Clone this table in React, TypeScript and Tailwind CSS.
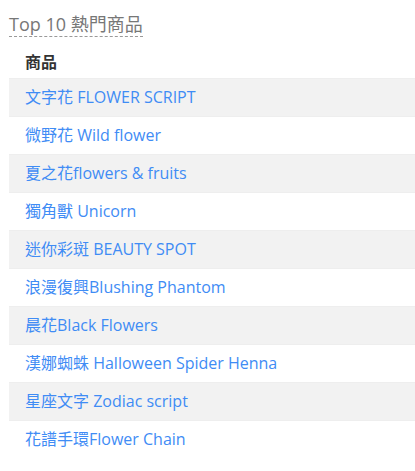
import React from 'react';

const items = [
  '文字花 FLOWER SCRIPT',
  '微野花 Wild flower',
  '夏之花flowers & fruits',
  '獨角獸 Unicorn',
  '迷你彩斑 BEAUTY SPOT',
  '浪漫復興Blushing Phantom',
  '晨花Black Flowers',
  '漢娜蜘蛛 Halloween Spider Henna',
  '星座文字 Zodiac script',
  '花譜手環Flower Chain',
];

export default function App() {
  return (
    <div className="w-[415px] h-[471px] bg-white overflow-hidden font-['Open_Sans','Noto_Sans_CJK_TC',sans-serif]">
      <div className="pl-[9px] pt-[12px]">
        <h3 className="inline-block text-[18px] leading-[24px] text-[#777] font-normal border-b border-dashed border-[#999]">
          Top 10 熱門商品
        </h3>
      </div>
      <table className="ml-[9px] mt-[7px] w-[406px] border-collapse text-[16px]">
        <thead>
          <tr>
            <th className="text-left pl-4 h-[34px] font-bold text-[#333] font-['Noto_Sans_CJK_TC',serif]">商品</th>
          </tr>
        </thead>
        <tbody>
          {items.map((name, i) => (
            <tr key={name} className={i % 2 === 0 ? 'bg-[#f2f2f2]' : 'bg-white'}>
              <td className="pl-4 h-[38px] border-t border-[#eee] text-[#3f8cf5] whitespace-nowrap">
                {name}
              </td>
            </tr>
          ))}
        </tbody>
      </table>
    </div>
  );
}
